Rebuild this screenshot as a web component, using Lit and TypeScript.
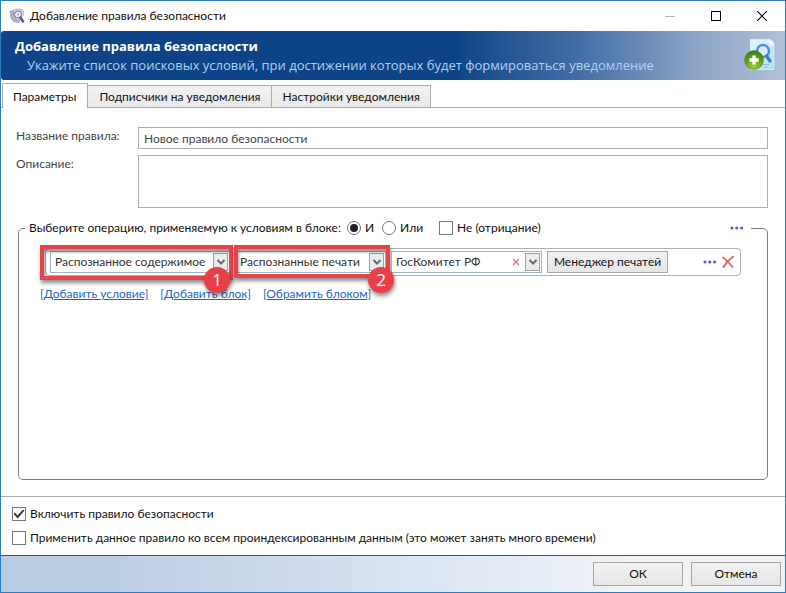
import { LitElement, html, css, svg } from "lit";
import { customElement, property, state } from "lit/decorators.js";
import { classMap } from "lit/directives/class-map.js";

const chevron = svg`<path d="M1.5 2 L5 5.5 L8.5 2" fill="none" stroke="#666a70" stroke-width="2"/>`;

@customElement("rule-combo")
class RuleCombo extends LitElement {
  @property() label = "";
  @property() value = "";
  @property() callout = "";
  @property({ type: Boolean }) clearable = false;

  static styles = css`
    :host { display: block; position: relative; height: 22px; }
    .box {
      display: flex; align-items: center; height: 22px; box-sizing: border-box;
      border: 1px solid #9fb3bf; background: #fff; position: relative;
    }
    select {
      flex: 1; min-width: 0; height: 20px; border: 0; margin: 0; padding: 0 16px 0 4px;
      appearance: none; background: transparent; color: #333; outline: 0;
      font: 12px/20px Lato, "Noto Sans", sans-serif;
    }
    .arrow {
      position: absolute; right: 1px; top: 1px; width: 15px; height: 18px; box-sizing: border-box;
      border: 1px solid #a0a0a0; background: #ececec; pointer-events: none;
      display: grid; place-items: center;
    }
    .clear {
      position: absolute; right: 19px; top: 4px; width: 12px; height: 12px; padding: 0;
      border: 0; background: none; display: grid; place-items: center;
    }
    .frame {
      position: absolute; inset: -6px -3px -7px -10px; border: 4px solid #e5444b;
      box-shadow: 1px 3px 4px rgba(0, 0, 0, 0.45), inset 1px 3px 3px rgba(0, 0, 0, 0.4);
      pointer-events: none;
    }
    .frame.tight { inset: -6px -4px -5px -1px; }
    .badge {
      position: absolute; right: 0; top: 16px; width: 26px; height: 26px; border-radius: 50%;
      background: #ea3f48; color: #fff; box-shadow: 1px 3px 4px rgba(0, 0, 0, 0.45);
      font: 17px/26px "Open Sans", sans-serif; text-align: center; pointer-events: none; z-index: 2;
    }
    .tight + .badge { right: -8px; }
  `;

  render() {
    return html`
      <div class="box">
        <select aria-label=${this.label}><option>${this.value}</option></select>
        ${this.clearable
          ? html`<button class="clear" aria-label="Очистить">
              <svg width="8" height="8" viewBox="0 0 8 8"><path d="M1 1 L7 7 M7 1 L1 7" stroke="#e8686c" stroke-width="1.2"/></svg>
            </button>`
          : ""}
        <span class="arrow"><svg width="10" height="8" viewBox="0 0 10 8">${chevron}</svg></span>
      </div>
      ${this.callout
        ? html`<div class=${classMap({ frame: true, tight: this.callout === "2" })}></div>
            <div class="badge">${this.callout}</div>`
        : ""}
    `;
  }
}

@customElement("app-root")
class AppRoot extends LitElement {
  @state() private tab = 0;

  static styles = css`
    :host {
      display: flex; flex-direction: column; box-sizing: border-box; min-height: 100vh;
      border: 1px solid #2b7dc2; background: #fff; color: #111;
      font: 12px/16px Lato, "Noto Sans", sans-serif;
    }
    button, input, textarea { font: inherit; color: inherit; margin: 0; box-sizing: border-box; }
    .titlebar { display: flex; align-items: center; height: 30px; padding-left: 8px; }
    .titlebar h1 { flex: 1; margin: 0 0 0 5px; font-size: 12px; font-weight: 400; }
    .win { width: 46px; height: 30px; padding: 0; border: 0; background: none; display: grid; place-items: center; }
    .banner {
      display: flex; align-items: center; justify-content: space-between; height: 49px;
      padding: 0 9px 0 14px; border-radius: 3px 0 0 3px; color: #fff;
      background: linear-gradient(90deg, #0e4487 58%, #4872a8 75%, #8ea5c6 89%, #b1c0d5 100%);
    }
    .banner h2 { margin: 0; font: 700 13px/18px "Open Sans", sans-serif; }
    .banner p { margin: 0; padding-left: 12px; font: 13px/20px "Open Sans", sans-serif; color: #b4d0f4; }
    .tabs { display: flex; align-items: flex-end; height: 24px; margin-top: 3px; padding-left: 1px; }
    .tab {
      height: 22px; padding: 0 10px 0 11px; border: 1px solid #acacac; border-bottom: 0; border-left: 0;
      background: linear-gradient(#f2f2f2, #e8e8e8); line-height: 21px;
    }
    .tab.on {
      height: 25px; padding: 0 11px 0 10px; background: #fff; border-left: 1px solid #acacac;
      position: relative; margin-bottom: -1px; z-index: 1;
    }
    .panel {
      flex: 1; display: flex; flex-direction: column; padding: 19px 17px 16px;
      border: solid #acacac; border-width: 1px 0;
    }
    .form { display: grid; grid-template-columns: 114px 1fr; gap: 6px 8px; color: #444; margin-left: -2px; }
    .form label { padding-top: 1px; }
    .form input, .form textarea {
      display: block; width: 100%; border: 1px solid #abadb3; background: #fff; outline: 0;
      padding: 0 5px; resize: none; border-radius: 0;
    }
    .form input { height: 22px; }
    .form textarea { height: 53px; }
    fieldset {
      flex: 1; min-width: 0; margin: 10px 0 0; padding: 10px 26px 0 21px;
      border: 1px solid #7d7d7d; border-radius: 5px;
    }
    legend {
      display: flex; align-items: center; box-sizing: border-box; height: 20px;
      width: calc(100% + 25px); margin-left: -15px; padding: 0 7px 0 4px;
    }
    label.opt { display: flex; align-items: center; gap: 4px; }
    .q { margin-right: 6px; }
    .or { margin-left: 8px; }
    .not { margin-left: 16px; }
    .grow { flex: 1; }
    input[type="radio"], input[type="checkbox"] {
      appearance: none; width: 14px; height: 14px; flex: none; border: 1px solid #777;
      background: #fff; display: grid; place-items: center;
    }
    input[type="radio"] { border-radius: 50%; }
    input[type="radio"]:checked::before {
      content: ""; width: 8px; height: 8px; border-radius: 50%; background: #222;
    }
    input[type="checkbox"]:checked::before {
      content: ""; width: 11px; height: 9px; background: #333;
      clip-path: polygon(0 48%, 12% 34%, 36% 66%, 88% 0, 100% 12%, 38% 100%);
    }
    .icon { padding: 0; border: 0; background: none; display: grid; place-items: center; }
    .row {
      display: flex; align-items: center; gap: 5px; box-sizing: border-box; height: 28px;
      margin-left: 5px; padding: 0 6px 0 4px; border: 1px solid #b0b0b0; border-radius: 4px;
    }
    .wide { width: 180px; }
    .mid { width: 151px; }
    .btn {
      border: 1px solid #a6a6a6; background: linear-gradient(#f1f1f1, #e6e6e6); padding: 0;
      text-align: center; white-space: nowrap;
    }
    .stamps { width: 121px; height: 22px; flex: none; }
    .links { display: flex; gap: 12px; margin-top: 10px; }
    a { color: #1a66c0; }
    .options { display: flex; flex-direction: column; gap: 8px; padding: 9px 11px; }
    .options label { display: flex; align-items: center; gap: 4px; }
    .footer {
      display: flex; align-items: center; justify-content: flex-end; gap: 8px; height: 37px;
      box-sizing: border-box; padding-right: 4px; border-top: 1px solid #3c566f;
      background: linear-gradient(90deg, #bacce4 0%, #bccee6 15%, #e6edf7 68%, #f1f2f5 80%);
    }
    .footer .btn { width: 90px; height: 24px; }
  `;

  private dots() {
    return html`<svg width="14" height="4" viewBox="0 0 14 4" fill="#6359c4">
      <circle cx="2" cy="2" r="1.6"/><circle cx="6.8" cy="2" r="1.6"/><circle cx="11.6" cy="2" r="1.6"/></svg>`;
  }

  render() {
    const tabs = ["Параметры", "Подписчики на уведомления", "Настройки уведомления"];
    return html`
      <header class="titlebar">
        <svg width="16" height="16" viewBox="0 0 16 16">
          <path d="M4 2 Q9 -0.5 14 2 L15 6 L12 10 L5 9 Z" fill="#d5d8e0" stroke="#a9adb9" stroke-width="0.8"/>
          <path d="M1 3.5 L4 2.5 L4.5 8 Q6 12 11 12 L10 14.5 Q4 14.5 2 10 Z" fill="#b4b7c2" stroke="#8b8e9b" stroke-width="0.7"/>
          <circle cx="9" cy="6.5" r="3.4" fill="#eff3fa" stroke="#8188a0" stroke-width="1.2"/>
          <circle cx="9" cy="6.5" r="1.2" fill="#a7b6d4"/>
          <path d="M11.4 9.5 L14 13.5" stroke="#4d5c94" stroke-width="2.6" stroke-linecap="round"/>
        </svg>
        <h1>Добавление правила безопасности</h1>
        <button class="win" aria-label="Свернуть"><svg width="10" height="10"><path d="M0 5.5 H10" stroke="#b8b8b8"/></svg></button>
        <button class="win" aria-label="Развернуть"><svg width="10" height="10"><rect x="0.5" y="0.5" width="9" height="9" fill="none" stroke="#000"/></svg></button>
        <button class="win" aria-label="Закрыть"><svg width="10" height="10"><path d="M0 0 L10 10 M10 0 L0 10" stroke="#000" stroke-width="1.1"/></svg></button>
      </header>
      <section class="banner">
        <div>
          <h2>Добавление правила безопасности</h2>
          <p>Укажите список поисковых условий, при достижении которых будет формироваться уведомление</p>
        </div>
        <svg width="32" height="34" viewBox="0 0 32 34">
          <defs>
            <linearGradient id="page" x1="0" y1="0" x2="1" y2="1"><stop offset="0" stop-color="#e8f6fe"/><stop offset="1" stop-color="#b5dbf5"/></linearGradient>
            <radialGradient id="plus" cx="0.5" cy="0.85" r="0.85"><stop offset="0" stop-color="#9ccf2a"/><stop offset="1" stop-color="#357a16"/></radialGradient>
          </defs>
          <path d="M6.5 0.5 H25 Q30 1 30 7 V30.5 H6.5 Z" fill="url(#page)" stroke="#d2eafa"/>
          <path d="M24 1 Q25 6 30 7 Q30 1 24 1Z" fill="#f4fbff"/>
          <circle cx="19" cy="12" r="6" fill="#d8eefc" stroke="#4a8fcf" stroke-width="2.4"/>
          <path d="M22.5 17 L26 22" stroke="#3f7fc4" stroke-width="3.2" stroke-linecap="round"/>
          <path d="M18 25.5 H25 M20 28 H24" stroke="#8fc0e6"/>
          <circle cx="10" cy="21" r="9.4" fill="url(#plus)" stroke="#4c8a28" stroke-width="0.6"/>
          <path d="M10 16.5 V25.5 M5.5 21 H14.5" stroke="#fff" stroke-width="3.4"/>
        </svg>
      </section>
      <div class="tabs" role="tablist">
        ${tabs.map((t, i) => html`<button role="tab" aria-selected=${i === this.tab}
          class=${classMap({ tab: true, on: i === this.tab })} @click=${() => (this.tab = i)}>${t}</button>`)}
      </div>
      <main class="panel">
        <div class="form">
          <label for="name">Название правила:</label>
          <input id="name" type="text" .value=${"Новое правило безопасности"}>
          <label for="desc">Описание:</label>
          <textarea id="desc"></textarea>
        </div>
        <fieldset>
          <legend>
            <span class="q">Выберите операцию, применяемую к условиям в блоке:</span>
            <label class="opt"><input type="radio" name="op" checked>И</label>
            <label class="opt or"><input type="radio" name="op">Или</label>
            <label class="opt not"><input type="checkbox">Не (отрицание)</label>
            <span class="grow"></span>
            <button class="icon" aria-label="Меню блока">${this.dots()}</button>
          </legend>
          <div class="row">
            <rule-combo class="wide" label="Поле" value="Распознанное содержимое" callout="1"></rule-combo>
            <rule-combo class="mid" label="Тип" value="Распознанные печати" callout="2"></rule-combo>
            <rule-combo class="mid" label="Печать" value="ГосКомитет РФ" clearable></rule-combo>
            <button class="btn stamps">Менеджер печатей</button>
            <span class="grow"></span>
            <button class="icon" aria-label="Меню условия">${this.dots()}</button>
            <button class="icon" aria-label="Удалить условие">
              <svg width="12" height="12" viewBox="0 0 12 12" fill="none" stroke="#d96a6c" stroke-linecap="round">
                <path d="M1 1.5 Q6 5 10.5 11" stroke-width="1.8"/><path d="M11 0.8 Q5 5 1.5 11" stroke-width="2"/></svg>
            </button>
          </div>
          <nav class="links">
            <a href="#">[Добавить условие]</a>
            <a href="#">[Добавить блок]</a>
            <a href="#">[Обрамить блоком]</a>
          </nav>
        </fieldset>
      </main>
      <section class="options">
        <label><input type="checkbox" checked>Включить правило безопасности</label>
        <label><input type="checkbox">Применить данное правило ко всем проиндексированным данным (это может занять много времени)</label>
      </section>
      <footer class="footer">
        <button class="btn">ОК</button>
        <button class="btn">Отмена</button>
      </footer>
    `;
  }
}
